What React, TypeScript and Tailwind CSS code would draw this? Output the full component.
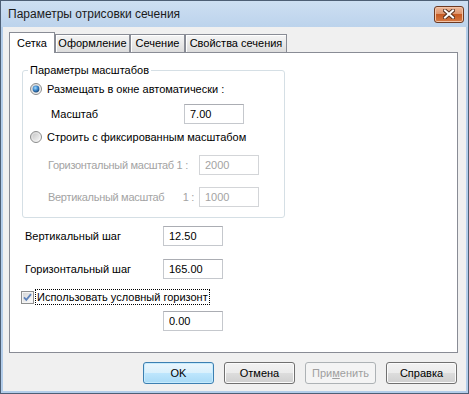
import type { ReactNode } from "react";

const font = "font-['Liberation_Sans',Arial,sans-serif]";

function Radio({ checked }: { checked?: boolean }) {
  return (
    <svg width="12" height="12" viewBox="0 0 12 12" className="shrink-0">
      <defs>
        <linearGradient id="radio-bg" x1="0" y1="0" x2="1" y2="1">
          <stop offset="0" stopColor="#d4d4d4" />
          <stop offset="1" stopColor="#fcfcfc" />
        </linearGradient>
        <linearGradient id="radio-off" x1="0" y1="0" x2="1" y2="1">
          <stop offset="0" stopColor="#c9c9c9" />
          <stop offset="1" stopColor="#f2f2f2" />
        </linearGradient>
        <radialGradient id="radio-on" cx="0.4" cy="0.35" r="0.75">
          <stop offset="0" stopColor="#a8dcfb" />
          <stop offset="0.45" stopColor="#3f8bd0" />
          <stop offset="1" stopColor="#12365e" />
        </radialGradient>
      </defs>
      <circle cx="6" cy="6" r="5.5" fill="url(#radio-bg)" stroke="#8b8c8c" />
      <circle cx="6" cy="6" r="3.4" fill={checked ? "url(#radio-on)" : "url(#radio-off)"} />
    </svg>
  );
}

function Checkbox() {
  return (
    <svg width="13" height="13" viewBox="0 0 13 13" className="shrink-0">
      <defs>
        <linearGradient id="cb-bg" x1="0" y1="0" x2="1" y2="1">
          <stop offset="0" stopColor="#d6d6d6" />
          <stop offset="1" stopColor="#fbfbfb" />
        </linearGradient>
      </defs>
      <rect x="0.5" y="0.5" width="12" height="12" fill="#f4f4f4" stroke="#8e8f8f" />
      <rect x="2" y="2" width="9" height="9" fill="url(#cb-bg)" />
      <path d="M3 6.3 L5.3 8.8 L10 3.2" fill="none" stroke="#5f83bb" strokeWidth="1.8" />
    </svg>
  );
}

function Field({ value, disabled }: { value: string; disabled?: boolean }) {
  return (
    <input
      readOnly
      value={value}
      disabled={disabled}
      className={
        disabled
          ? "h-[20px] w-[60px] shrink-0 border border-[#d3d5d8] bg-white pl-[5px] text-[11px] text-[#a3a3a3] outline-none"
          : "h-[20px] w-[60px] shrink-0 border border-[#c5c8cd] border-t-[#abadb3] bg-white pl-[5px] text-[11px] text-black outline-none"
      }
    />
  );
}

function Tab({ children, active, width }: { children: ReactNode; active?: boolean; width: string }) {
  if (active) {
    return (
      <div className={`${width} relative z-10 -mb-px flex h-[21px] items-center justify-center border border-b-0 border-[#898c95] bg-white`}>
        {children}
      </div>
    );
  }
  return (
    <div className={`${width} flex h-[18px] items-center justify-center border border-b-0 border-[#898c95] bg-[linear-gradient(#f5f5f5,#e9e9e9_50%,#dcdcdc)] shadow-[inset_1px_1px_0_#ffffff]`}>
      {children}
    </div>
  );
}

function DialogButton({ children, kind }: { children: ReactNode; kind?: "default" | "disabled" }) {
  const base = "flex h-[22px] w-[71px] items-center justify-center rounded-[3px] border text-[11px]";
  if (kind === "default") {
    return (
      <button className={`${base} border-[#3c7fb1] bg-[linear-gradient(#ebf6fd,#d9f0fc_50%,#bee6fd_50%,#a8daf6)] text-black shadow-[inset_0_0_0_1px_#c6ebfd]`}>
        {children}
      </button>
    );
  }
  if (kind === "disabled") {
    return <button className={`${base} border-[#adb2b5] bg-[#f4f4f4] text-[#9f9f9f]`}>{children}</button>;
  }
  return (
    <button className={`${base} border-[#707070] bg-[linear-gradient(#f2f2f2,#ebebeb_50%,#dddddd_50%,#cfcfcf)] text-black shadow-[inset_0_0_0_1px_#fbfbfb]`}>
      {children}
    </button>
  );
}

export default function App() {
  return (
    <div className={`${font} flex h-[394px] w-[469px] flex-col border border-[#4d5f75] bg-[#b3cdea] text-[11px] leading-[13px] text-black`}>
      {/* title bar */}
      <div className="flex h-[26px] shrink-0 items-center bg-[linear-gradient(#cddff2,#bcd3ec)] pl-[7px] pr-[4px]">
        <span className="text-[12px] leading-[15px] text-[#1b1b1b]">Параметры отрисовки сечения</span>
        <button className="ml-auto flex h-[17px] w-[30px] items-center justify-center rounded-[3px] border border-[#6e3a22] bg-[linear-gradient(#edb89a,#dc9168_50%,#c65a22_50%,#d57a44)] shadow-[inset_0_0_0_1px_#f2c4a8]">
          <svg width="12" height="10" viewBox="0 0 12 10">
            <path d="M2 1.5 L10 8.5 M10 1.5 L2 8.5" stroke="#5a3320" strokeWidth="4" strokeLinecap="square" />
            <path d="M2 1.5 L10 8.5 M10 1.5 L2 8.5" stroke="#ffffff" strokeWidth="2" strokeLinecap="square" />
          </svg>
        </button>
      </div>

      {/* client area */}
      <div className="mx-[2px] mb-[2px] flex flex-1 flex-col bg-[#f0f0f0] pl-[6px] pr-[8px] pt-[5px]">
        {/* tabs */}
        <div className="flex items-end">
          <Tab active width="w-[46px]">Сетка</Tab>
          <Tab width="w-[75px]">Оформление</Tab>
          <Tab width="w-[55px]">Сечение</Tab>
          <Tab width="w-[102px]">Свойства сечения</Tab>
        </div>

        {/* tab page */}
        <div className="flex h-[301px] flex-col border border-[#898c95] bg-white">
          <fieldset className="ml-[12px] mt-[11px] h-[154px] w-[263px] rounded-[3px] border border-[#d5dfe5] px-0">
            <legend className="ml-[5px] px-[2px]">Параметры масштабов</legend>

            <div className="mt-[5px] flex h-[14px] items-center gap-[5px] pl-[7px]">
              <Radio checked />
              <span>Размещать в окне автоматически :</span>
            </div>

            <div className="mt-[8px] flex h-[20px] items-center pl-[28px]">
              <span className="w-[133px]">Масштаб</span>
              <Field value="7.00" />
            </div>

            <div className="mt-[6px] flex h-[14px] items-center gap-[5px] pl-[7px]">
              <Radio />
              <span>Строить с фиксированным масштабом</span>
            </div>

            <div className="mt-[11px] flex h-[20px] items-center pl-[25px] text-[#a3a3a3]">
              <span className="w-[151px] whitespace-nowrap tracking-[-0.3px]">Горизонтальный масштаб 1 :</span>
              <Field value="2000" disabled />
            </div>

            <div className="mt-[12px] flex h-[20px] items-center pl-[25px] text-[#a3a3a3]">
              <span className="flex w-[151px] justify-between pr-[5px] tracking-[-0.3px]">
                <span>Вертикальный масштаб</span>
                <span>1 :</span>
              </span>
              <Field value="1000" disabled />
            </div>
          </fieldset>

          <div className="mt-[8px] flex h-[20px] items-center pl-[15px]">
            <span className="w-[138px]">Вертикальный шаг</span>
            <Field value="12.50" />
          </div>

          <div className="mt-[13px] flex h-[20px] items-center pl-[15px]">
            <span className="w-[138px]">Горизонтальный шаг</span>
            <Field value="165.00" />
          </div>

          <div className="mt-[10px] flex h-[16px] items-center gap-[1px] pl-[11px]">
            <Checkbox />
            <span className="border border-dotted border-black px-[1px] leading-[14px]">Использовать условный горизонт</span>
          </div>

          <div className="mt-[6px] pl-[153px]">
            <Field value="0.00" />
          </div>
        </div>

        {/* buttons */}
        <div className="mt-[9px] flex justify-end gap-[10px] pr-[1px]">
          <DialogButton kind="default">OK</DialogButton>
          <DialogButton>Отмена</DialogButton>
          <DialogButton kind="disabled">
            <span>
              При<span className="underline">м</span>енить
            </span>
          </DialogButton>
          <DialogButton>Справка</DialogButton>
        </div>
      </div>
    </div>
  );
}
